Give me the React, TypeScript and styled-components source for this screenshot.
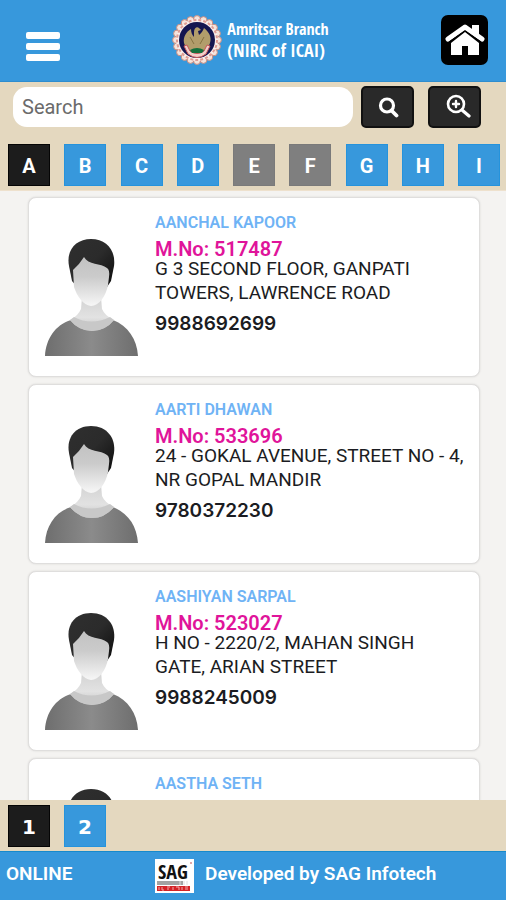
import React, { useState } from "react";
import styled, { createGlobalStyle } from "styled-components";

const blue = "#3798dc";
const sand = "#e4d8bf";
const ink = "#1b1c22";

const GlobalStyle = createGlobalStyle`
  *, *::before, *::after { box-sizing: border-box; }
  body { margin: 0; font-family: Roboto, "Liberation Sans", sans-serif; }
  h1, h2, p, ul { margin: 0; padding: 0; }
  button, input { font-family: inherit; }
`;

const Screen = styled.div`
  display: flex;
  flex-direction: column;
  height: 100vh;
  background: #f4f3f1;
  overflow: hidden;
`;

const Header = styled.header`
  display: flex;
  flex: none;
  align-items: center;
  justify-content: space-between;
  padding: 15px 18px 16px 26px;
  background: ${blue};
  border-bottom: 1px solid #2f8dce;
`;

const MenuButton = styled.button`
  display: flex;
  flex-direction: column;
  gap: 4px;
  width: 34px;
  padding: 12px 0 0;
  border: 0;
  background: none;
  cursor: pointer;
`;

const MenuBar = styled.span`
  height: 7px;
  border-radius: 2px;
  background: #fff;
`;

const Brand = styled.div`
  display: flex;
  align-items: center;
  gap: 5px;
`;

const BrandName = styled.h1`
  color: #fff;
  font-family: "Open Sans Condensed", "Liberation Sans Narrow", Roboto, sans-serif;
  font-size: 16px;
  font-weight: 700;
  line-height: 21px;
`;

const BrandRegion = styled.span`
  display: block;
  font-size: 18px;
`;

const HomeButton = styled.button`
  display: flex;
  align-items: center;
  justify-content: center;
  width: 47px;
  height: 50px;
  padding: 0;
  border: 0;
  border-radius: 7px;
  background: #000;
  cursor: pointer;
`;

const Filters = styled.section`
  flex: none;
  padding: 4px 0;
  background: ${sand};
  border-bottom: 1px solid #eee1cd;
`;

const SearchForm = styled.form`
  display: flex;
  align-items: center;
  padding: 0 25px 0 13px;
`;

const SearchInput = styled.input`
  flex: 1;
  min-width: 0;
  height: 40px;
  margin-right: 8px;
  padding: 0 9px;
  border: 0;
  border-radius: 14px;
  background: #fff;
  color: ${ink};
  font-size: 20px;
  &::placeholder { color: #6b6b6b; opacity: 1; }
`;

const SearchButton = styled.button`
  display: flex;
  align-items: center;
  justify-content: center;
  width: 53px;
  height: 42px;
  padding: 0;
  border: 2px solid #111;
  border-radius: 5px;
  background: #292929;
  cursor: pointer;
  & + & { margin-left: 14px; }
`;

const AdvancedButton = styled(SearchButton)`
  padding-left: 6px;
`;

const TileRow = styled.nav`
  display: flex;
  gap: 14px;
  padding: 0 8px;
  overflow: hidden;
`;

const LetterRow = styled(TileRow)`
  justify-content: space-between;
  padding: 16px 6px 0 8px;
`;

const Pager = styled(TileRow)`
  flex: none;
  padding-top: 5px;
  padding-bottom: 4px;
  background: ${sand};
`;

type TileTone = "current" | "active" | "off";
const tileFill = { current: "#1c1c1c", active: blue, off: "#7f7f7f" };
const tileEdge = { current: "#050505", active: "#2593dc", off: "#7a7a7a" };

const Tile = styled.button<{ $tone: TileTone }>`
  flex: none;
  width: 42px;
  height: 42px;
  padding: 2px 0 0;
  border: 1px solid ${(p) => tileEdge[p.$tone]};
  background: ${(p) => tileFill[p.$tone]};
  color: #fff;
  font-size: 20px;
  font-weight: 700;
  cursor: pointer;
`;

const PageTile = styled(Tile)`
  font-family: "DejaVu Sans", sans-serif;
`;

const List = styled.ul`
  display: flex;
  flex: 1;
  flex-direction: column;
  gap: 7px;
  min-height: 0;
  padding: 6px 26px 6px 28px;
  overflow: hidden;
  list-style: none;
`;

const Card = styled.li`
  display: flex;
  flex: none;
  gap: 17px;
  min-height: 180px;
  padding: 13px 12px 13px 16px;
  border: 1px solid #dfdedd;
  border-radius: 8px;
  background: #fff;
  box-shadow: 0 0 2px #d4d3d2;
`;

const Portrait = styled.div<{ $compact: boolean }>`
  flex: none;
  padding-top: ${(p) => (p.$compact ? 17 : 28)}px;
`;

const Details = styled.div`
  flex: 1;
  min-width: 0;
  color: ${ink};
`;

const Name = styled.h2`
  color: #6fb3f5;
  font-size: 16px;
  font-weight: 600;
  line-height: 24px;
`;

const MemberNo = styled.p`
  padding-top: 6px;
  color: #e0149a;
  font-size: 20px;
  font-weight: 600;
  line-height: 16px;
`;

const Address = styled.p`
  font-size: 19px;
  line-height: 24px;
`;

const Phone = styled.p`
  padding-top: 7px;
  font-family: Inter, sans-serif;
  font-size: 19px;
  font-weight: 600;
  line-height: 24px;
`;

const Footer = styled.footer`
  display: flex;
  flex: none;
  align-items: center;
  height: 49px;
  padding: 0 6px;
  border-top: 1px solid #178acb;
  background: ${blue};
  color: #fff;
  font-size: 19px;
  font-weight: 600;
`;

const Status = styled.span`
  width: 149px;
  padding-bottom: 5px;
`;

const Credit = styled.a`
  display: flex;
  align-items: center;
  gap: 11px;
  color: inherit;
  text-decoration: none;
`;

const CreditText = styled.span`
  padding-bottom: 5px;
`;

const petals = Array.from({ length: 20 }, (_, i) => {
  const a = (i / 20) * Math.PI * 2;
  return { x: 25 + 21 * Math.cos(a), y: 25 + 21 * Math.sin(a) };
});

const Emblem = () => (
  <svg width="50" height="50" viewBox="0 0 50 50" aria-hidden="true">
    {petals.map((p, i) => (
      <circle key={i} cx={p.x} cy={p.y} r="3.4" fill="#f5e4dc" stroke="#c98c80" strokeWidth="1" />
    ))}
    <circle cx="25" cy="25" r="21" fill="#f9efec" />
    <circle cx="25" cy="25" r="20" fill="none" stroke="#df9c94" strokeWidth="2" strokeDasharray="3 2" />
    <circle cx="25" cy="25" r="18" fill="#151650" />
    <path d="M22 17c0-4 3-6 5-4l2 2-3 1 1 4c3-2 4-5 5-7 5 4 8 9 6 15-2 6-6 8-9 9l-4 2-5-2c-4-2-7-5-8-9-1-6 2-11 7-14 0 3 1 6 3 8z" fill="#b29d6b" />
    <path d="M18 22l4 7M32 22l-4 7" stroke="#867342" strokeWidth="1" />
    <path d="M12 31l3-1 3 6q7 5 14 0l3-6 3 1-4 8q-9 7-18 0z" fill="#f1cfcb" stroke="#c75658" strokeWidth="1" />
    <path d="M18 35q7-4 14 0l-2 3H20z" fill="#14703c" />
  </svg>
);

const HomeIcon = () => (
  <svg width="40" height="34" viewBox="0 0 40 34" fill="#fff" aria-hidden="true">
    <path d="M27 2h7v11l-7-5z" />
    <path d="M3 16L20 4l17 12" fill="none" stroke="#fff" strokeWidth="5" strokeLinecap="round" strokeLinejoin="round" />
    <path d="M6 20L20 9l14 11v12H23v-9h-6v9H6z" />
    <path d="M4 19L20 8l16 11" fill="none" stroke="#000" strokeWidth="1" />
  </svg>
);

const SearchIcon = () => (
  <svg width="22" height="22" viewBox="0 0 22 22" fill="none" stroke="#fff" aria-hidden="true">
    <circle cx="10" cy="9.500" r="6.500" strokeWidth="3.200" />
    <path d="M14.500 14.500l5 5" strokeWidth="3.800" strokeLinecap="round" />
  </svg>
);

const ZoomInIcon = () => (
  <svg width="26" height="26" viewBox="0 0 26 26" fill="none" stroke="#fff" strokeLinecap="round" aria-hidden="true">
    <circle cx="11" cy="10" r="8" strokeWidth="2.600" />
    <path d="M17 16l7 6" strokeWidth="3.200" />
    <path d="M8 10h6M11 7v6" strokeWidth="2.400" />
  </svg>
);

const Avatar = () => (
  <svg width="93" height="117" viewBox="0 0 93 117" aria-hidden="true">
    <defs>
      <linearGradient id="face" x1="0" y1="0" x2="0" y2="1">
        <stop offset="0" stopColor="#c2c2c2" />
        <stop offset="0.400" stopColor="#cbcbcb" />
        <stop offset="1" stopColor="#f7f7f7" />
      </linearGradient>
      <linearGradient id="neck" x1="0" y1="0" x2="0" y2="1">
        <stop offset="0" stopColor="#d2d2d2" />
        <stop offset="0.600" stopColor="#e2e2e2" />
        <stop offset="1" stopColor="#c4c4c4" />
      </linearGradient>
      <linearGradient id="shirt" x1="0" y1="0" x2="1" y2="0">
        <stop offset="0" stopColor="#6e6e6e" />
        <stop offset="0.500" stopColor="#8b8b8b" />
        <stop offset="1" stopColor="#6e6e6e" />
      </linearGradient>
      <linearGradient id="hair" x1="0" y1="0" x2="1" y2="1">
        <stop offset="0" stopColor="#2f2f2f" />
        <stop offset="0.500" stopColor="#2b2b2b" />
        <stop offset="1" stopColor="#0c0c0c" />
      </linearGradient>
    </defs>
    <path d="M0 117C1 100 10 86 26 81Q47 92 68 81C83 87 92 100 93 117z" fill="url(#shirt)" />
    <path d="M37 58L36 70Q33 77 25 81Q34 92 47 92Q60 92 69 81Q60 77 57 70L56 58z" fill="url(#neck)" />
    <path d="M29 78Q46 87 65 78L69 81Q60 92 47 92Q34 92 25 81z" fill="#c8c8c8" />
    <path d="M24 27C21 11 31 0 46 0C62 0 71 12 69 27L66 42L62 48H32L27 42z" fill="url(#hair)" />
    <path d="M28 31Q34 26 39 18C43 26 56 24 62 29Q65 31 64 38L63 46C61 57 54 67 46 67C38 66 32 57 29 48z" fill="url(#face)" />
  </svg>
);

const SagLogo = () => (
  <svg width="39" height="34" viewBox="0 0 39 34" role="img" aria-label="SAG Infotech">
    <rect width="39" height="34" fill="#fff" />
    <text x="3" y="20" fontFamily="Open Sans Condensed, Liberation Sans Narrow, Roboto, sans-serif" fontSize="20" fill="#111">SAG</text>
    <path d="M2 22h26v4H2z" fill="#a3a3a3" />
    <path d="M25 22v4M29 22v4M32 22v4" stroke="#dedede" />
    <path d="M2 27h33v5H2z" fill="#d42327" />
    <path d="M4 28v3M7 28v3h2M12 28h3M12 30h2M18 28v3M21 28h3v3M27 28v3M30 28h3M30 30h3" stroke="#f3aaaa" strokeWidth="1" fill="none" />
    <circle cx="36" cy="4" r="1" fill="#d68b8b" />
  </svg>
);

const emptyLetters = ["E", "F"];
const letters = ["A", "B", "C", "D", "E", "F", "G", "H", "I"];

const members = [
  { name: "AANCHAL KAPOOR", no: "517487", address: "G 3 SECOND FLOOR, GANPATI TOWERS, LAWRENCE ROAD", phone: "9988692699" },
  { name: "AARTI DHAWAN", no: "533696", address: "24 - GOKAL AVENUE, STREET NO - 4, NR GOPAL MANDIR", phone: "9780372230" },
  { name: "AASHIYAN SARPAL", no: "523027", address: "H NO - 2220/2, MAHAN SINGH GATE, ARIAN STREET", phone: "9988245009" },
  { name: "AASTHA SETH" },
];

export default function App() {
  const [letter, setLetter] = useState("A");
  const [page, setPage] = useState(1);

  return (
    <Screen>
      <GlobalStyle />
      <Header>
        <MenuButton type="button" aria-label="Menu">
          <MenuBar />
          <MenuBar />
          <MenuBar />
        </MenuButton>
        <Brand>
          <Emblem />
          <BrandName>
            Amritsar Branch
            <BrandRegion>(NIRC of ICAI)</BrandRegion>
          </BrandName>
        </Brand>
        <HomeButton type="button" aria-label="Home">
          <HomeIcon />
        </HomeButton>
      </Header>
      <Filters>
        <SearchForm role="search" onSubmit={(e) => e.preventDefault()}>
          <SearchInput type="text" placeholder="Search" aria-label="Search" />
          <SearchButton type="submit" aria-label="Search members">
            <SearchIcon />
          </SearchButton>
          <AdvancedButton type="button" aria-label="Advanced search">
            <ZoomInIcon />
          </AdvancedButton>
        </SearchForm>
        <LetterRow aria-label="Filter by letter">
          {letters.map((l) => (
            <Tile
              key={l}
              type="button"
              disabled={emptyLetters.includes(l)}
              $tone={emptyLetters.includes(l) ? "off" : l === letter ? "current" : "active"}
              onClick={() => setLetter(l)}
            >
              {l}
            </Tile>
          ))}
        </LetterRow>
      </Filters>
      <List>
        {members.map((m) => (
          <Card key={m.name}>
            <Portrait $compact={!m.address}>
              <Avatar />
            </Portrait>
            <Details>
              <Name>{m.name}</Name>
              {m.no && <MemberNo>M.No: {m.no}</MemberNo>}
              {m.address && <Address>{m.address}</Address>}
              {m.phone && <Phone>{m.phone}</Phone>}
            </Details>
          </Card>
        ))}
      </List>
      <Pager aria-label="Pages">
        {[1, 2].map((n) => (
          <PageTile key={n} type="button" $tone={n === page ? "current" : "active"} onClick={() => setPage(n)}>
            {n}
          </PageTile>
        ))}
      </Pager>
      <Footer>
        <Status>ONLINE</Status>
        <Credit href="#sag-infotech">
          <SagLogo />
          <CreditText>Developed by SAG Infotech</CreditText>
        </Credit>
      </Footer>
    </Screen>
  );
}
